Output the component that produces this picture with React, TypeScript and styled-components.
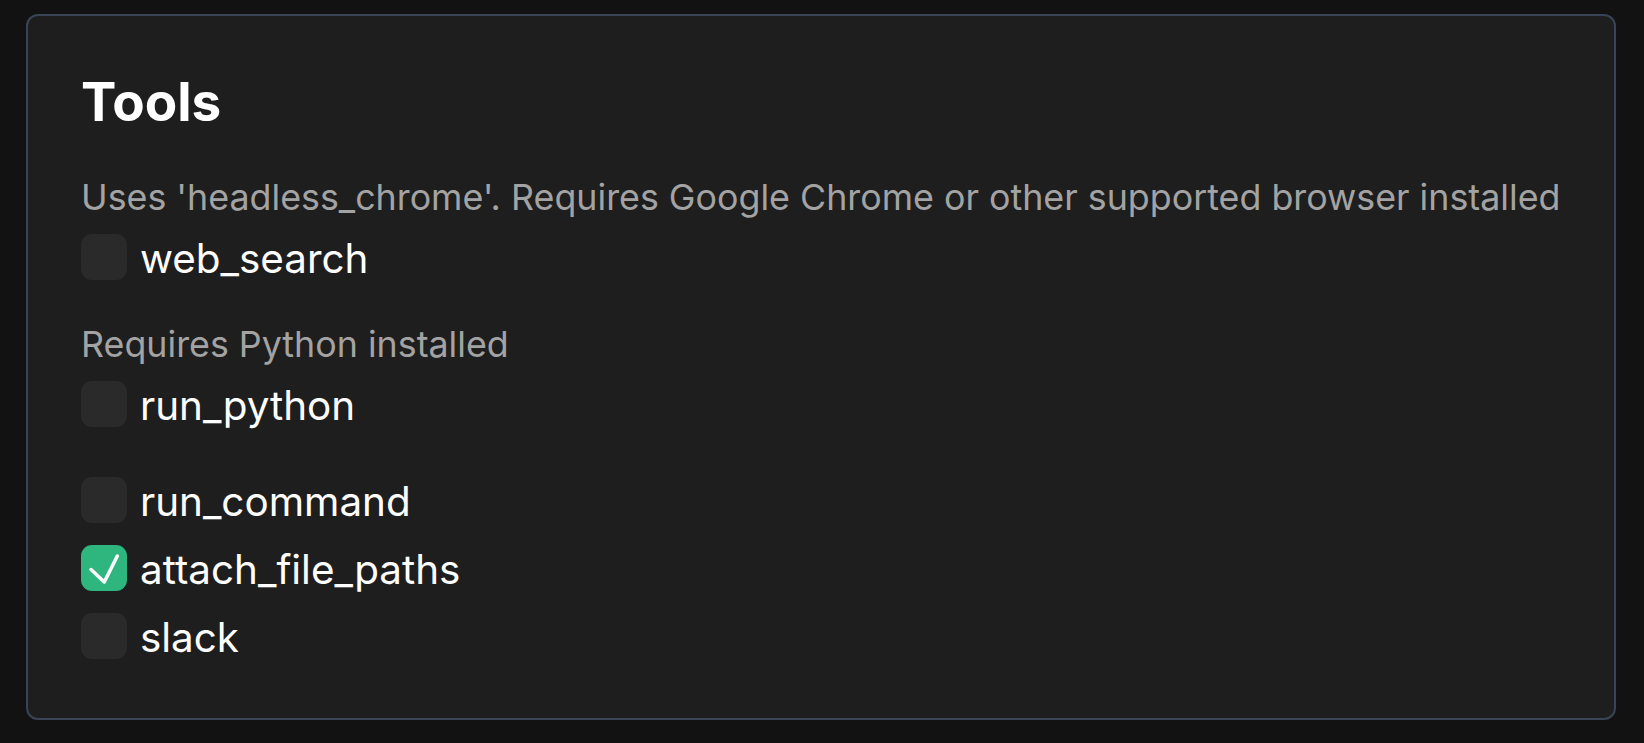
import React from "react";
import styled, { createGlobalStyle } from "styled-components";

interface Tool {
  name: string;
  enabled: boolean;
}

interface ToolGroup {
  note?: string;
  tools: Tool[];
}

const groups: ToolGroup[] = [
  {
    note: "Uses 'headless_chrome'. Requires Google Chrome or other supported browser installed",
    tools: [{ name: "web_search", enabled: false }],
  },
  {
    note: "Requires Python installed",
    tools: [{ name: "run_python", enabled: false }],
  },
  {
    tools: [
      { name: "run_command", enabled: false },
      { name: "attach_file_paths", enabled: true },
      { name: "slack", enabled: false },
    ],
  },
];

const App: React.FC = () => {
  return (
    <>
      <GlobalStyle />
      <Card>
        <Title>Tools</Title>
        <Groups>
          {groups.map((group, i) => (
            <Group key={i}>
              {group.note && <Note>{group.note}</Note>}
              {group.tools.map((tool) => (
                <Row key={tool.name}>
                  <Box $checked={tool.enabled}>
                    {tool.enabled && (
                      <svg width="46" height="46" viewBox="0 0 46 46">
                        <path
                          d="M10 24.5 L23.3 37 L36.3 11"
                          fill="none"
                          stroke="#ffffff"
                          strokeWidth="3.5"
                          strokeLinecap="round"
                          strokeLinejoin="round"
                        />
                      </svg>
                    )}
                  </Box>
                  <Label>{tool.name}</Label>
                </Row>
              ))}
            </Group>
          ))}
        </Groups>
      </Card>
    </>
  );
};

export default App;

const GlobalStyle = createGlobalStyle`
  html, body {
    margin: 0;
    background: #121212;
  }

  body {
    padding: 14px 28px 23px 26px;
    font-family: Inter, "Noto Sans", sans-serif;
  }
`;

const Card = styled.div`
  display: flex;
  flex-direction: column;

  height: 706px;
  box-sizing: border-box;

  padding: 55px 53px 60px;

  background: #1e1e1e;
  border: 2px solid #3a4457;
  border-radius: 12px;
`;

const Title = styled.h2`
  margin: 0 0 50px;

  color: #ffffff;
  font-size: 53px;
  font-weight: 700;
  line-height: 62px;
`;

const Groups = styled.div`
  display: flex;
  flex-direction: column;
  gap: 50px;
`;

const Group = styled.div`
  display: flex;
  flex-direction: column;
  gap: 22px;
`;

const Note = styled.div`
  color: #a3a3a3;
  font-size: 35.8px;
  line-height: 29px;
  white-space: nowrap;
`;

const Row = styled.label`
  display: flex;
  align-items: center;
  gap: 13px;
`;

const Box = styled.span<{ $checked: boolean }>`
  display: flex;
  flex-shrink: 0;

  width: 46px;
  height: 46px;

  border-radius: 11px;
  background: ${(p) => (p.$checked ? "#2fb67f" : "#2a2a2a")};
`;

const Label = styled.span`
  color: #ffffff;
  font-size: 40.4px;
  line-height: 42px;
  padding-top: 4px;
`;
